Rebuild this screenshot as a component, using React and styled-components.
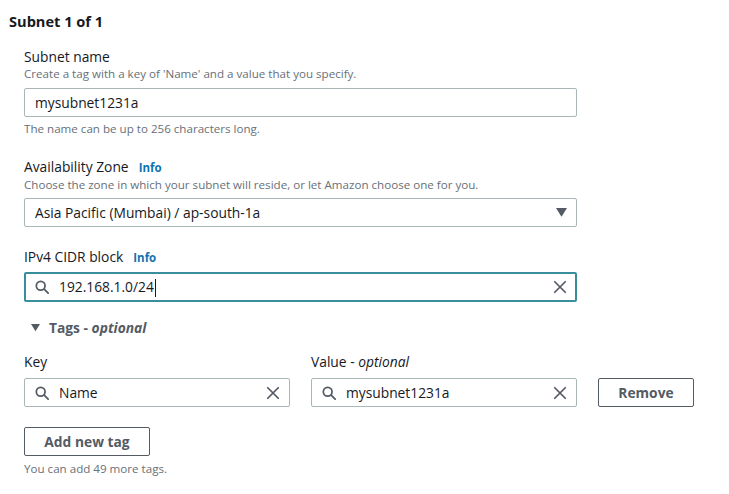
import React from 'react';
import styled, { createGlobalStyle } from 'styled-components';

const GlobalStyle = createGlobalStyle`
  body {
    margin: 0;
    background: #ffffff;
    font-family: 'Open Sans', 'Noto Sans', Arial, sans-serif;
    color: #16191f;
  }
`;

const Page = styled.div`
  width: 729px;
  height: 494px;
  padding: 11px 0 0 9px;
  box-sizing: border-box;
`;

const Title = styled.h2`
  margin: 0;
  font-size: 14.6px;
  font-weight: 700;
  line-height: 20px;
  color: #16191f;
`;

const Body = styled.div`
  padding: 17px 0 0 15px;
  display: flex;
  flex-direction: column;
`;

const Field = styled.div`
  display: flex;
  flex-direction: column;
  width: ${(p) => p.$width || '553px'};
  margin-bottom: ${(p) => p.$gap || '0'};
`;

const Label = styled.div`
  font-size: 13.8px;
  line-height: 18px;
  color: #16191f;
  display: flex;
  align-items: baseline;
  gap: 10px;
  margin-bottom: ${(p) => p.$mb || '0'};
  em {
    font-style: italic;
  }
`;

const InfoLink = styled.span`
  font-size: 11.5px;
  font-weight: 700;
  color: #0f73b0;
`;

const Desc = styled.div`
  font-size: 11.6px;
  line-height: 16px;
  color: #687078;
  margin-bottom: ${(p) => p.$mb || '0'};
`;

const Box = styled.div`
  height: ${(p) => (p.$focus ? '30px' : '29px')};
  box-sizing: border-box;
  border: ${(p) => (p.$focus ? '2px solid #3a8d9b' : '1px solid #aab7b8')};
  border-radius: 2px;
  display: flex;
  align-items: center;
  padding: ${(p) => (p.$focus ? '0 8px 0 9px' : '0 9px 0 10px')};
  gap: 10px;
  font-size: 13.8px;
  color: #16191f;
  margin-bottom: ${(p) => p.$mb || '0'};
  background: #fff;
`;

const Value = styled.span`
  flex: 1;
  white-space: nowrap;
`;

const Caret = styled.span`
  display: inline-block;
  width: 1px;
  height: 18px;
  background: #16191f;
  vertical-align: middle;
  margin-left: 1px;
`;

const TagsToggle = styled.div`
  display: flex;
  align-items: center;
  gap: 9px;
  padding-left: 7px;
  font-size: 13.8px;
  line-height: 18px;
  font-weight: 700;
  color: #545b64;
  margin: 17px 0 16px;
  em {
    font-weight: 700;
    font-style: italic;
  }
`;

const TagRow = styled.div`
  display: flex;
  align-items: flex-end;
  gap: 21px;
`;

const Button = styled.button`
  height: 29px;
  box-sizing: border-box;
  border: 1px solid #545b64;
  border-radius: 2px;
  background: #fff;
  font-family: inherit;
  font-size: 13.8px;
  font-weight: 700;
  color: #545b64;
  width: ${(p) => p.$width};
  padding: 0;
  margin-bottom: ${(p) => p.$mb || '0'};
`;

const SearchIcon = () => (
  <svg width="14" height="14" viewBox="0 0 16 16" fill="none" stroke="#545b64" strokeWidth="2" strokeLinecap="round">
    <circle cx="6.5" cy="6.5" r="5" />
    <path d="M10.5 10.5L15 15" />
  </svg>
);

const ClearIcon = () => (
  <svg width="14" height="14" viewBox="0 0 16 16" fill="none" stroke="#545b64" strokeWidth="2" strokeLinecap="round">
    <path d="M2 2L14 14M14 2L2 14" />
  </svg>
);

const DownTriangle = ({ size = 10 }) => (
  <svg width={size} height={size * 0.8} viewBox="0 0 10 8">
    <path d="M0 0H10L5 8Z" fill="#545b64" />
  </svg>
);

export default function App() {
  return (
    <Page>
      <GlobalStyle />
      <Title>Subnet 1 of 1</Title>
      <Body>
        <Field $gap="21px">
          <Label>Subnet name</Label>
          <Desc $mb="6px">Create a tag with a key of 'Name' and a value that you specify.</Desc>
          <Box $mb="4px">
            <Value>mysubnet1231a</Value>
          </Box>
          <Desc>The name can be up to 256 characters long.</Desc>
        </Field>

        <Field $gap="21px">
          <Label>
            Availability Zone <InfoLink>Info</InfoLink>
          </Label>
          <Desc $mb="5px">Choose the zone in which your subnet will reside, or let Amazon choose one for you.</Desc>
          <Box>
            <Value>Asia Pacific (Mumbai) / ap-south-1a</Value>
            <DownTriangle size={11} />
          </Box>
        </Field>

        <Field>
          <Label $mb="5px">
            IPv4 CIDR block <InfoLink>Info</InfoLink>
          </Label>
          <Box $focus>
            <SearchIcon />
            <Value>
              192.168.1.0/24<Caret />
            </Value>
            <ClearIcon />
          </Box>
        </Field>

        <TagsToggle>
          <DownTriangle size={9} />
          <span>
            Tags - <em>optional</em>
          </span>
        </TagsToggle>

        <TagRow>
          <Field $width="266px">
            <Label $mb="7px">Key</Label>
            <Box>
              <SearchIcon />
              <Value>Name</Value>
              <ClearIcon />
            </Box>
          </Field>
          <Field $width="266px">
            <Label $mb="7px">
              <span>
                Value - <em>optional</em>
              </span>
            </Label>
            <Box>
              <SearchIcon />
              <Value>mysubnet1231a</Value>
              <ClearIcon />
            </Box>
          </Field>
          <Button $width="96px">Remove</Button>
        </TagRow>

        <Field $width="auto" style={{ marginTop: '20px', alignItems: 'flex-start' }}>
          <Button $width="126px" $mb="5px">Add new tag</Button>
          <Desc>You can add 49 more tags.</Desc>
        </Field>
      </Body>
    </Page>
  );
}
